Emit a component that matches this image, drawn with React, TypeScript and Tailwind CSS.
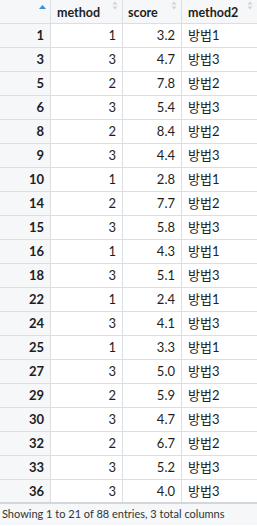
import React from "react";

const rows: [number, number, string, number][] = [
  [1, 1, "3.2", 1],
  [3, 3, "4.7", 3],
  [5, 2, "7.8", 2],
  [6, 3, "5.4", 3],
  [8, 2, "8.4", 2],
  [9, 3, "4.4", 3],
  [10, 1, "2.8", 1],
  [14, 2, "7.7", 2],
  [15, 3, "5.8", 3],
  [16, 1, "4.3", 1],
  [18, 3, "5.1", 3],
  [22, 1, "2.4", 1],
  [24, 3, "4.1", 3],
  [25, 1, "3.3", 1],
  [27, 3, "5.0", 3],
  [29, 2, "5.9", 2],
  [30, 3, "4.7", 3],
  [32, 2, "6.7", 2],
  [33, 3, "5.2", 3],
  [36, 3, "4.0", 3],
];

function SortIcon() {
  return (
    <svg width="6" height="9" viewBox="0 0 6 9" className="absolute right-[4px] top-[1px]">
      <path d="M3 0.5 L5.5 3.5 L0.5 3.5 Z" fill="#d0d3d6" />
      <path d="M3 8.5 L5.5 5.5 L0.5 5.5 Z" fill="#d0d3d6" />
    </svg>
  );
}

export default function App() {
  const font = "font-['Lato','Noto_Sans_CJK_KR',sans-serif]";
  return (
    <div className={`w-[257px] h-[526px] bg-white text-[#1e1e1e] overflow-hidden ${font}`}>
      <div className="flex h-[24px] border-b border-[#dcdfe2] bg-[#f5f7f8] text-[12.5px] font-bold">
        <div className="relative w-[51px] border-r border-[#dcdfe2]">
          <svg width="7" height="4" viewBox="0 0 7 4" className="absolute left-[39px] top-[5px]">
            <path d="M3.5 0 L7 4 L0 4 Z" fill="#3a8fd6" />
          </svg>
        </div>
        <div className="relative w-[72px] border-r border-[#dcdfe2] pl-[6px] leading-[23px] pt-[1px]">
          method
          <SortIcon />
        </div>
        <div className="relative w-[59px] border-r border-[#dcdfe2] pl-[5px] leading-[23px] pt-[1px]">
          score
          <SortIcon />
        </div>
        <div className="relative flex-1 pl-[6px] leading-[23px] pt-[1px]">
          method2
          <SortIcon />
        </div>
      </div>
      {rows.map(([id, m, s, m2], i) => (
        <div
          key={id}
          className={`flex h-[24px] text-[13px] leading-[23px] ${
            i === rows.length - 1 ? "border-b-2 border-[#d4d7da]" : "border-b border-[#dcdfe2]"
          }`}
        >
          <div className="w-[51px] border-r border-[#dcdfe2] bg-[#f5f7f8] text-right pr-[6px] font-bold">
            {id}
          </div>
          <div className="w-[72px] border-r border-[#dcdfe2] text-right pr-[6px]">{m}</div>
          <div className="w-[59px] border-r border-[#dcdfe2] text-right pr-[6px]">{s}</div>
          <div className="flex-1 pl-[6px]">방법{m2}</div>
        </div>
      ))}
      <div className="h-[21px] bg-[#f5f7f8] pl-[2px] text-[11px] leading-[19px] text-[#333] whitespace-nowrap">
        Showing 1 to 21 of 88 entries, 3 total columns
      </div>
    </div>
  );
}
